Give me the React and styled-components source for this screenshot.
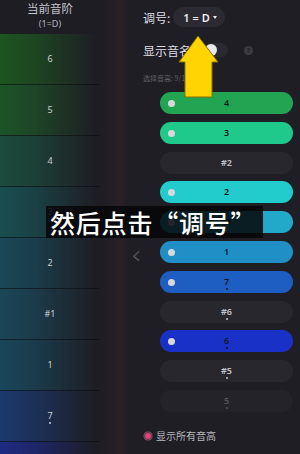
import React from 'react'
import styled, { createGlobalStyle } from 'styled-components'

const Global = createGlobalStyle`
  html, body { margin: 0; padding: 0; background: #1e1d24; }
  body { font-family: "Noto Sans", "Noto Sans CJK SC", sans-serif; }
`

const Page = styled.div`
  position: relative;
  width: 300px;
  height: 454px;
  display: flex;
  overflow: hidden;
  background: #1e1d24;
`

const LeftCol = styled.div`
  width: 100px;
  display: flex;
  flex-direction: column;
`

const ColHeader = styled.div`
  height: 34px;
  flex-shrink: 0;
  display: flex;
  flex-direction: column;
  align-items: center;
  color: #c6c6cc;
  font-family: "Noto Sans CJK SC", sans-serif;
  font-size: 11.5px;
  line-height: 14px;
  padding-top: 1px;
  box-sizing: border-box;
  small {
    font-family: "Noto Sans", sans-serif;
    font-size: 9px;
    margin-top: 2px;
    color: #b4b4bc;
  }
`

const ScaleRow = styled.div`
  height: 51px;
  flex-shrink: 0;
  box-sizing: border-box;
  border-bottom: 1px solid rgba(10, 12, 16, 0.6);
  display: flex;
  align-items: center;
  justify-content: center;
  background: linear-gradient(to right, ${p => p.$c} 0%, ${p => p.$c}bb 35%, #1e1d24 96%);
  color: #d0d0d6;
  font-size: 9px;
`

const Note = styled.span`
  position: relative;
  line-height: 10px;
  &::after {
    content: ${p => (p.$low ? '""' : 'none')};
    position: absolute;
    left: 50%;
    bottom: -3px;
    width: 2px;
    height: 2px;
    margin-left: -1px;
    border-radius: 50%;
    background: currentColor;
  }
`

const Strip = styled.div`
  width: 30px;
  background: linear-gradient(to right, #1e1d24 0%, #241f26 45%, #2b2026 70%, #1e1d24 100%);
`

const Panel = styled.div`
  flex: 1;
  display: flex;
  flex-direction: column;
  padding: 7px 7px 0 13px;
  background: #1f1e25;
  color: #dcdce2;
  font-family: "Noto Sans CJK SC", sans-serif;
`

const KeyRow = styled.div`
  display: flex;
  align-items: center;
  height: 20px;
  gap: 3px;
  font-size: 12px;
`

const KeyPill = styled.div`
  height: 20px;
  padding: 0 8px 0 10px;
  border-radius: 10px;
  background: #2b2a32;
  display: flex;
  align-items: center;
  gap: 3px;
  font-family: "Noto Sans", sans-serif;
  font-size: 11px;
  font-weight: 600;
  color: #ececf0;
  &::after {
    content: "";
    border-left: 2.5px solid transparent;
    border-right: 2.5px solid transparent;
    border-top: 3px solid #ececf0;
  }
`

const NameRow = styled.div`
  display: flex;
  align-items: center;
  height: 20px;
  margin-top: 13px;
  font-size: 12px;
`

const Toggle = styled.div`
  width: 24px;
  height: 14px;
  border-radius: 7px;
  background: #2a2930;
  margin-left: 13px;
  position: relative;
  &::before {
    content: "";
    position: absolute;
    left: 1px;
    top: 1px;
    width: 12px;
    height: 12px;
    border-radius: 50%;
    background: #e8e8ec;
  }
`

const Help = styled.div`
  width: 9px;
  height: 9px;
  border-radius: 50%;
  background: #3c3b43;
  color: #1f1e25;
  font-size: 7px;
  font-weight: 700;
  line-height: 9px;
  text-align: center;
  margin-left: 16px;
  font-family: "Noto Sans", sans-serif;
`

const Count = styled.div`
  margin-top: 13px;
  font-size: 7px;
  line-height: 10px;
  color: #5f5e66;
`

const PillList = styled.div`
  display: flex;
  flex-direction: column;
  gap: 7.8px;
  margin-top: 9px;
  margin-left: 17px;
`

const Pill = styled.div`
  position: relative;
  height: 22px;
  border-radius: 11px;
  background: ${p => p.$c || (p.$dim ? '#24232a' : '#28272e')};
  display: flex;
  align-items: center;
  justify-content: center;
  font-family: "Noto Sans", sans-serif;
  font-size: 9px;
  font-weight: 600;
  color: ${p => (p.$c ? '#16171c' : p.$dim ? '#55545c' : '#c4c4ca')};
  &::before {
    content: ${p => (p.$c ? '""' : 'none')};
    position: absolute;
    left: 8px;
    top: 8px;
    width: 7px;
    height: 7px;
    border-radius: 50%;
    background: #d8d8dc;
  }
`

const Footer = styled.div`
  margin-top: auto;
  margin-bottom: 11px;
  margin-left: 1px;
  display: flex;
  align-items: center;
  gap: 4px;
  font-size: 10px;
  color: #b8b8be;
`

const Radio = styled.span`
  width: 6px;
  height: 6px;
  border-radius: 50%;
  background: #e23f7c;
  border: 1.5px solid #5a3a48;
  box-shadow: 0 0 0 0.5px #8a5a6c;
`

const Handle = styled.div`
  position: absolute;
  left: 130px;
  top: 243px;
  color: #5c5b63;
  font-size: 22px;
  line-height: 24px;
  font-family: "Noto Sans", sans-serif;
  transform: scaleX(0.55);
`

const Caption = styled.div`
  position: absolute;
  left: 46px;
  top: 206px;
  width: 217px;
  height: 32px;
  padding-left: 4px;
  box-sizing: border-box;
  background: rgba(6, 6, 8, 0.86);
  color: #ffffff;
  font-family: "Noto Sans CJK SC", sans-serif;
  font-size: 25px;
  font-weight: 500;
  line-height: 32px;
  white-space: nowrap;
  letter-spacing: 0.8px;
`

const Arrow = styled.svg`
  position: absolute;
  left: 178px;
  top: 35px;
`

const rows = [
  ['6', '#1d5520'],
  ['5', '#1d5428'],
  ['4', '#1b4c3c'],
  ['3', '#194e50'],
  ['2', '#1a4858'],
  ['#1', '#1b4658'],
  ['1', '#19465a'],
  ['7', '#1c386c', true],
  ['', '#1e2a82'],
]

const pills = [
  { n: '4', c: '#22a552' },
  { n: '3', c: '#1fc98c' },
  { n: '#2' },
  { n: '2', c: '#22cccc' },
  { n: '#1', c: '#22a8c8' },
  { n: '1', c: '#1f8fc6' },
  { n: '7', c: '#1e5dc2', low: true },
  { n: '#6', low: true },
  { n: '6', c: '#1a31c8', low: true },
  { n: '#5', low: true },
  { n: '5', low: true, dim: true },
]

export default function App() {
  return (
    <>
      <Global />
      <Page>
        <LeftCol>
          <ColHeader>
            当前音阶
            <small>(1=D)</small>
          </ColHeader>
          {rows.map(([n, c, low], i) => (
            <ScaleRow key={i} $c={c}>
              <Note $low={low}>{n}</Note>
            </ScaleRow>
          ))}
        </LeftCol>
        <Strip />
        <Panel>
          <KeyRow>
            调号:
            <KeyPill>1 = D</KeyPill>
          </KeyRow>
          <NameRow>
            显示音名
            <Toggle />
            <Help>?</Help>
          </NameRow>
          <Count>选择音高: 9/16</Count>
          <PillList>
            {pills.map(p => (
              <Pill key={p.n} $c={p.c} $dim={p.dim}>
                <Note $low={p.low}>{p.n}</Note>
              </Pill>
            ))}
          </PillList>
          <Footer>
            <Radio />
            显示所有音高
          </Footer>
        </Panel>
        <Handle>&lt;</Handle>
        <Caption>然后点击“调号”</Caption>
        <Arrow width="42" height="64" viewBox="0 0 42 64">
          <polygon
            points="20,1 40,27 34,27 34,62 7,62 7,27 1,27"
            fill="#ffd400"
            stroke="#8a7000"
            strokeWidth="1"
            strokeLinejoin="round"
          />
        </Arrow>
      </Page>
    </>
  )
}
